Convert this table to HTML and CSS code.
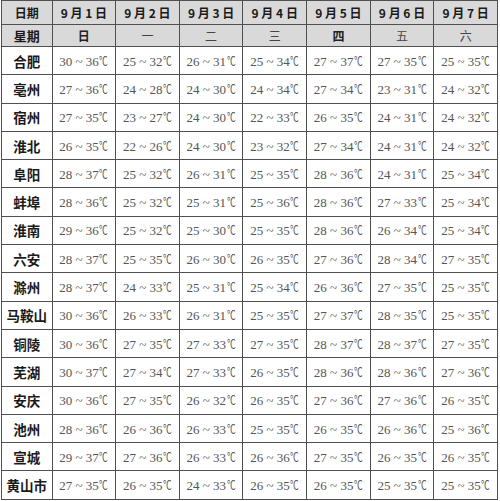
FILE: index.html
```html
<!DOCTYPE html>
<html lang="zh">
<head>
<meta charset="utf-8">
<link rel="stylesheet" href="styles.css">
</head>
<body>
<table class="wx">
<colgroup>
<col class="c-city"><col class="c-day"><col class="c-day"><col class="c-day"><col class="c-day"><col class="c-day"><col class="c-day"><col class="c-day">
</colgroup>
<thead>
<tr class="r-date"><th>日期</th><th>9 月 1 日</th><th>9 月 2 日</th><th>9 月 3 日</th><th>9 月 4 日</th><th>9 月 5 日</th><th>9 月 6 日</th><th>9 月 7 日</th></tr>
<tr class="r-week"><th>星期</th><td class="b">日</td><td>一</td><td>二</td><td>三</td><td class="b">四</td><td>五</td><td>六</td></tr>
</thead>
<tbody>
<tr><th>合肥</th><td>30 ~ 36<span class="u">℃</span></td><td>25 ~ 32<span class="u">℃</span></td><td>26 ~ 31<span class="u">℃</span></td><td>25 ~ 34<span class="u">℃</span></td><td>27 ~ 37<span class="u">℃</span></td><td>27 ~ 35<span class="u">℃</span></td><td>25 ~ 35<span class="u">℃</span></td></tr>
<tr><th>亳州</th><td>27 ~ 36<span class="u">℃</span></td><td>24 ~ 28<span class="u">℃</span></td><td>24 ~ 30<span class="u">℃</span></td><td>24 ~ 34<span class="u">℃</span></td><td>27 ~ 34<span class="u">℃</span></td><td>23 ~ 31<span class="u">℃</span></td><td>24 ~ 32<span class="u">℃</span></td></tr>
<tr><th>宿州</th><td>27 ~ 35<span class="u">℃</span></td><td>23 ~ 27<span class="u">℃</span></td><td>24 ~ 30<span class="u">℃</span></td><td>22 ~ 33<span class="u">℃</span></td><td>26 ~ 35<span class="u">℃</span></td><td>24 ~ 31<span class="u">℃</span></td><td>24 ~ 32<span class="u">℃</span></td></tr>
<tr><th>淮北</th><td>26 ~ 35<span class="u">℃</span></td><td>22 ~ 26<span class="u">℃</span></td><td>24 ~ 30<span class="u">℃</span></td><td>23 ~ 32<span class="u">℃</span></td><td>27 ~ 34<span class="u">℃</span></td><td>24 ~ 31<span class="u">℃</span></td><td>24 ~ 32<span class="u">℃</span></td></tr>
<tr><th>阜阳</th><td>28 ~ 37<span class="u">℃</span></td><td>25 ~ 32<span class="u">℃</span></td><td>26 ~ 31<span class="u">℃</span></td><td>25 ~ 35<span class="u">℃</span></td><td>28 ~ 36<span class="u">℃</span></td><td>24 ~ 31<span class="u">℃</span></td><td>25 ~ 34<span class="u">℃</span></td></tr>
<tr><th>蚌埠</th><td>28 ~ 36<span class="u">℃</span></td><td>25 ~ 32<span class="u">℃</span></td><td>25 ~ 31<span class="u">℃</span></td><td>25 ~ 36<span class="u">℃</span></td><td>28 ~ 36<span class="u">℃</span></td><td>27 ~ 33<span class="u">℃</span></td><td>25 ~ 34<span class="u">℃</span></td></tr>
<tr><th>淮南</th><td>29 ~ 36<span class="u">℃</span></td><td>25 ~ 32<span class="u">℃</span></td><td>25 ~ 30<span class="u">℃</span></td><td>25 ~ 35<span class="u">℃</span></td><td>28 ~ 36<span class="u">℃</span></td><td>26 ~ 34<span class="u">℃</span></td><td>25 ~ 34<span class="u">℃</span></td></tr>
<tr><th>六安</th><td>28 ~ 37<span class="u">℃</span></td><td>25 ~ 35<span class="u">℃</span></td><td>26 ~ 30<span class="u">℃</span></td><td>26 ~ 35<span class="u">℃</span></td><td>27 ~ 36<span class="u">℃</span></td><td>28 ~ 34<span class="u">℃</span></td><td>27 ~ 35<span class="u">℃</span></td></tr>
<tr><th>滁州</th><td>28 ~ 37<span class="u">℃</span></td><td>24 ~ 33<span class="u">℃</span></td><td>25 ~ 31<span class="u">℃</span></td><td>25 ~ 34<span class="u">℃</span></td><td>26 ~ 36<span class="u">℃</span></td><td>27 ~ 35<span class="u">℃</span></td><td>25 ~ 35<span class="u">℃</span></td></tr>
<tr><th>马鞍山</th><td>30 ~ 36<span class="u">℃</span></td><td>26 ~ 33<span class="u">℃</span></td><td>26 ~ 31<span class="u">℃</span></td><td>25 ~ 35<span class="u">℃</span></td><td>27 ~ 37<span class="u">℃</span></td><td>28 ~ 35<span class="u">℃</span></td><td>25 ~ 35<span class="u">℃</span></td></tr>
<tr><th>铜陵</th><td>30 ~ 36<span class="u">℃</span></td><td>27 ~ 35<span class="u">℃</span></td><td>27 ~ 33<span class="u">℃</span></td><td>27 ~ 35<span class="u">℃</span></td><td>28 ~ 37<span class="u">℃</span></td><td>28 ~ 37<span class="u">℃</span></td><td>27 ~ 35<span class="u">℃</span></td></tr>
<tr><th>芜湖</th><td>30 ~ 37<span class="u">℃</span></td><td>27 ~ 34<span class="u">℃</span></td><td>27 ~ 33<span class="u">℃</span></td><td>26 ~ 35<span class="u">℃</span></td><td>28 ~ 36<span class="u">℃</span></td><td>28 ~ 36<span class="u">℃</span></td><td>27 ~ 36<span class="u">℃</span></td></tr>
<tr><th>安庆</th><td>30 ~ 36<span class="u">℃</span></td><td>27 ~ 35<span class="u">℃</span></td><td>26 ~ 32<span class="u">℃</span></td><td>26 ~ 35<span class="u">℃</span></td><td>27 ~ 36<span class="u">℃</span></td><td>27 ~ 36<span class="u">℃</span></td><td>26 ~ 35<span class="u">℃</span></td></tr>
<tr><th>池州</th><td>28 ~ 36<span class="u">℃</span></td><td>26 ~ 36<span class="u">℃</span></td><td>26 ~ 33<span class="u">℃</span></td><td>25 ~ 35<span class="u">℃</span></td><td>26 ~ 35<span class="u">℃</span></td><td>26 ~ 36<span class="u">℃</span></td><td>25 ~ 36<span class="u">℃</span></td></tr>
<tr><th>宣城</th><td>29 ~ 37<span class="u">℃</span></td><td>27 ~ 36<span class="u">℃</span></td><td>26 ~ 33<span class="u">℃</span></td><td>26 ~ 36<span class="u">℃</span></td><td>27 ~ 35<span class="u">℃</span></td><td>26 ~ 35<span class="u">℃</span></td><td>26 ~ 35<span class="u">℃</span></td></tr>
<tr><th>黄山市</th><td>27 ~ 35<span class="u">℃</span></td><td>26 ~ 35<span class="u">℃</span></td><td>24 ~ 33<span class="u">℃</span></td><td>26 ~ 35<span class="u">℃</span></td><td>26 ~ 35<span class="u">℃</span></td><td>25 ~ 35<span class="u">℃</span></td><td>25 ~ 35<span class="u">℃</span></td></tr>
</tbody>
</table>
</body>
</html>
```
FILE: styles.css
```css
html, body {
  margin: 0;
  padding: 0;
  background: #ffffff;
}
body {
  padding: 0 0 0 1px;
  font-family: "Liberation Serif", "Noto Sans CJK SC", serif;
}
.wx {
  border-collapse: collapse;
  table-layout: fixed;
  width: 497px;
}
.c-city { width: 50px; }
.c-day { width: 63px; }
.wx th, .wx td {
  border: 1px solid #505050;
  padding: 0;
  text-align: center;
  vertical-align: middle;
  white-space: nowrap;
  overflow: hidden;
}
.wx td {
  font-size: 13px;
  color: #555555;
  font-weight: normal;
}
.wx td .u {
  display: inline-block;
  font-family: "Noto Sans CJK SC", sans-serif;
  font-size: 12px;
  transform: scaleX(0.72);
  transform-origin: left center;
  margin-right: -3px;
  margin-left: 0.5px;
}
.wx tbody th {
  font-size: 13.5px;
  font-weight: bold;
  color: #1a1a1a;
  font-family: "Noto Sans CJK SC", sans-serif;
}
.wx tbody tr { height: 28.3px; }
.r-date { height: 24px; }
.r-week { height: 22px; }
.r-date th, .r-week th, .r-week td {
  background: #d9d9d9;
}
.r-date th {
  font-size: 12px;
  font-weight: bold;
  color: #1a1a1a;
  font-family: "Noto Sans CJK SC", sans-serif;
}
.r-week th {
  font-size: 13px;
  font-weight: bold;
  color: #1a1a1a;
  font-family: "Noto Sans CJK SC", sans-serif;
}
.r-week td {
  font-size: 12px;
  color: #444444;
  font-family: "Noto Sans CJK SC", sans-serif;
}
.r-week td.b { font-weight: bold; color: #222222; }
```
